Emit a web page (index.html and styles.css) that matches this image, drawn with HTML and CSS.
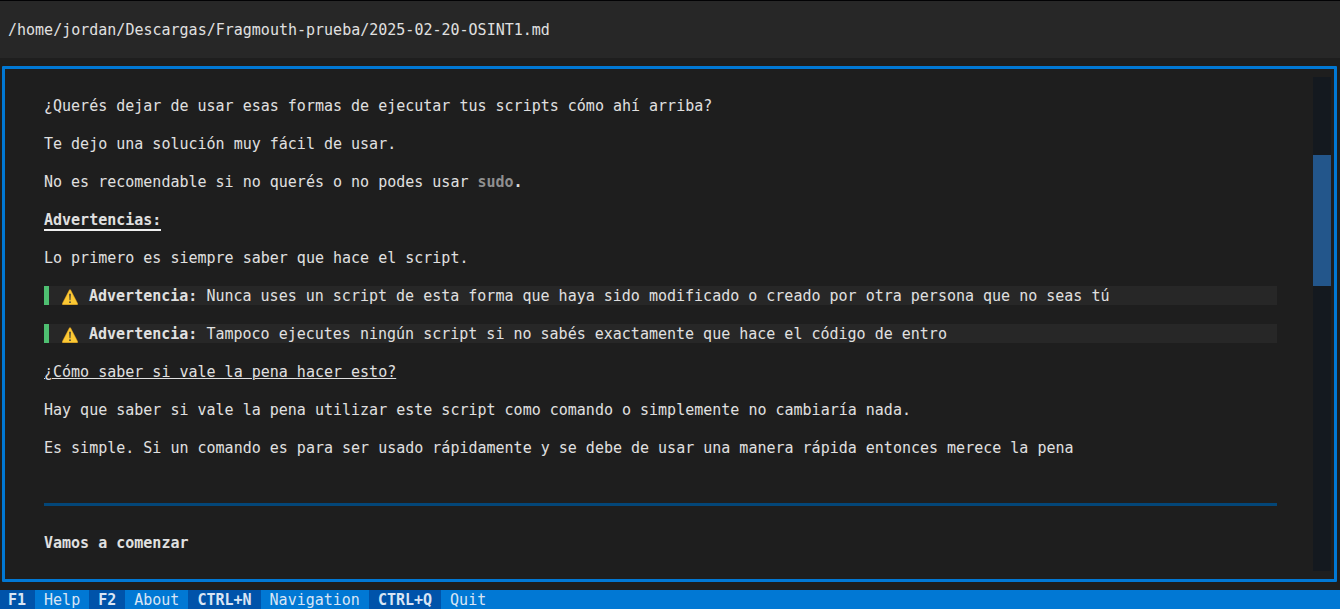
FILE: index.html
```html
<!DOCTYPE html>
<html lang="es">
<head>
<meta charset="utf-8">
<title>2025-02-20-OSINT1.md</title>
<link rel="stylesheet" href="styles.css">
</head>
<body>
<svg class="defs" aria-hidden="true">
  <symbol id="warning" viewBox="0 0 16 16">
    <path d="M7.4.9Q8 0 8.6.9L15.6 14.4Q16 15.7 15 15.7H1Q0 15.7.4 14.4Z" fill="#fcc934" stroke="#f0a91c" stroke-width=".5" stroke-linejoin="round"/>
    <path d="M7.1 5Q8 4.2 8.9 5L8.5 11.2H7.5Z" fill="#47433a"/>
    <circle cx="8" cy="13.2" r=".9" fill="#47433a"/>
  </symbol>
</svg>
<header class="path">/home/jordan/Descargas/Fragmouth-prueba/2025-02-20-OSINT1.md</header>
<main class="viewer">
  <article class="document">
    <p>¿Querés dejar de usar esas formas de ejecutar tus scripts cómo ahí arriba?</p>
    <p>Te dejo una solución muy fácil de usar.</p>
    <p>No es recomendable si no querés o no podes usar <code>sudo</code><b>.</b></p>
    <h2><span class="heavy-line">Advertencias:</span></h2>
    <p>Lo primero es siempre saber que hace el script.</p>
    <blockquote><svg class="warning"><use href="#warning"/></svg><span><b>Advertencia:</b> Nunca uses un script de esta forma que haya sido modificado o creado por otra persona que no seas tú</span></blockquote>
    <blockquote><svg class="warning"><use href="#warning"/></svg><span><b>Advertencia:</b> Tampoco ejecutes ningún script si no sabés exactamente que hace el código de entro</span></blockquote>
    <h3>¿Cómo saber si vale la pena hacer esto?</h3>
    <p>Hay que saber si vale la pena utilizar este script como comando o simplemente no cambiaría nada.</p>
    <p>Es simple. Si un comando es para ser usado rápidamente y se debe de usar una manera rápida entonces merece la pena</p>
    <hr>
    <h4>Vamos a comenzar</h4>
  </article>
  <div class="scrollbar"><div class="thumb"></div></div>
</main>
<footer class="keys">
  <button type="button"><kbd>F1</kbd><span>Help</span></button>
  <button type="button"><kbd>F2</kbd><span>About</span></button>
  <button type="button"><kbd>CTRL+N</kbd><span>Navigation</span></button>
  <button type="button"><kbd>CTRL+Q</kbd><span>Quit</span></button>
</footer>
</body>
</html>
```
FILE: styles.css
```css
* {
  box-sizing: border-box;
}

body {
  display: flex;
  flex-direction: column;
  min-height: 100vh;
  margin: 0;
  background: #1e1e1e;
  color: #e0e0e0;
  font: 15px/18px "DejaVu Sans Mono", monospace;
}

.defs {
  position: absolute;
  width: 0;
  height: 0;
}

.path {
  padding: 20px 8px 19px;
  border-top: 1px solid #020204;
  background: #272727;
}

.viewer {
  display: flex;
  flex: 1;
  margin: 8px 3px 8px 2px;
  padding: 8px 3px 8px 0;
  border: 3px solid #0178d4;
  border-radius: 1px;
}

.document {
  display: flex;
  flex: 1;
  flex-direction: column;
  gap: 19px;
  padding: 19px 36px 0 39px;
}

p,
h2,
h3,
h4,
blockquote {
  margin: 0;
  padding-top: 1px;
  font-size: inherit;
}

code {
  color: #8f8f8f;
  font: inherit;
  font-weight: bold;
}

h2 {
  display: flex;
}

.heavy-line {
  height: 20px;
  margin-bottom: -2px;
  border-bottom: 2px solid #f0f0f0;
}

h3 {
  font-weight: normal;
  text-decoration: underline;
  text-decoration-thickness: 1px;
}

blockquote {
  display: flex;
  gap: 11px;
  padding-left: 13px;
  border-left: 5px solid #4ebf71;
  background: #272727;
}

.warning {
  flex: none;
  width: 16px;
  height: 16px;
  margin-top: 2px;
}

hr {
  width: 100%;
  height: 3px;
  margin: 27px 0 8px;
  border: 0;
  background: #034678;
}

.scrollbar {
  width: 18px;
  padding-top: 78px;
  background: #14191f;
}

.thumb {
  height: 131px;
  background: #23568b;
}

.keys {
  display: flex;
  background: #0178d4;
}

.keys button {
  display: flex;
  padding: 0;
  border: 0;
  background: none;
  color: #d8e5f5;
  font: inherit;
}

.keys kbd,
.keys span {
  padding: 1px 9px 0;
  font: inherit;
}

.keys kbd {
  background: #0053aa;
  font-weight: bold;
}

.keys button:first-child kbd {
  padding-left: 8px;
}
```
